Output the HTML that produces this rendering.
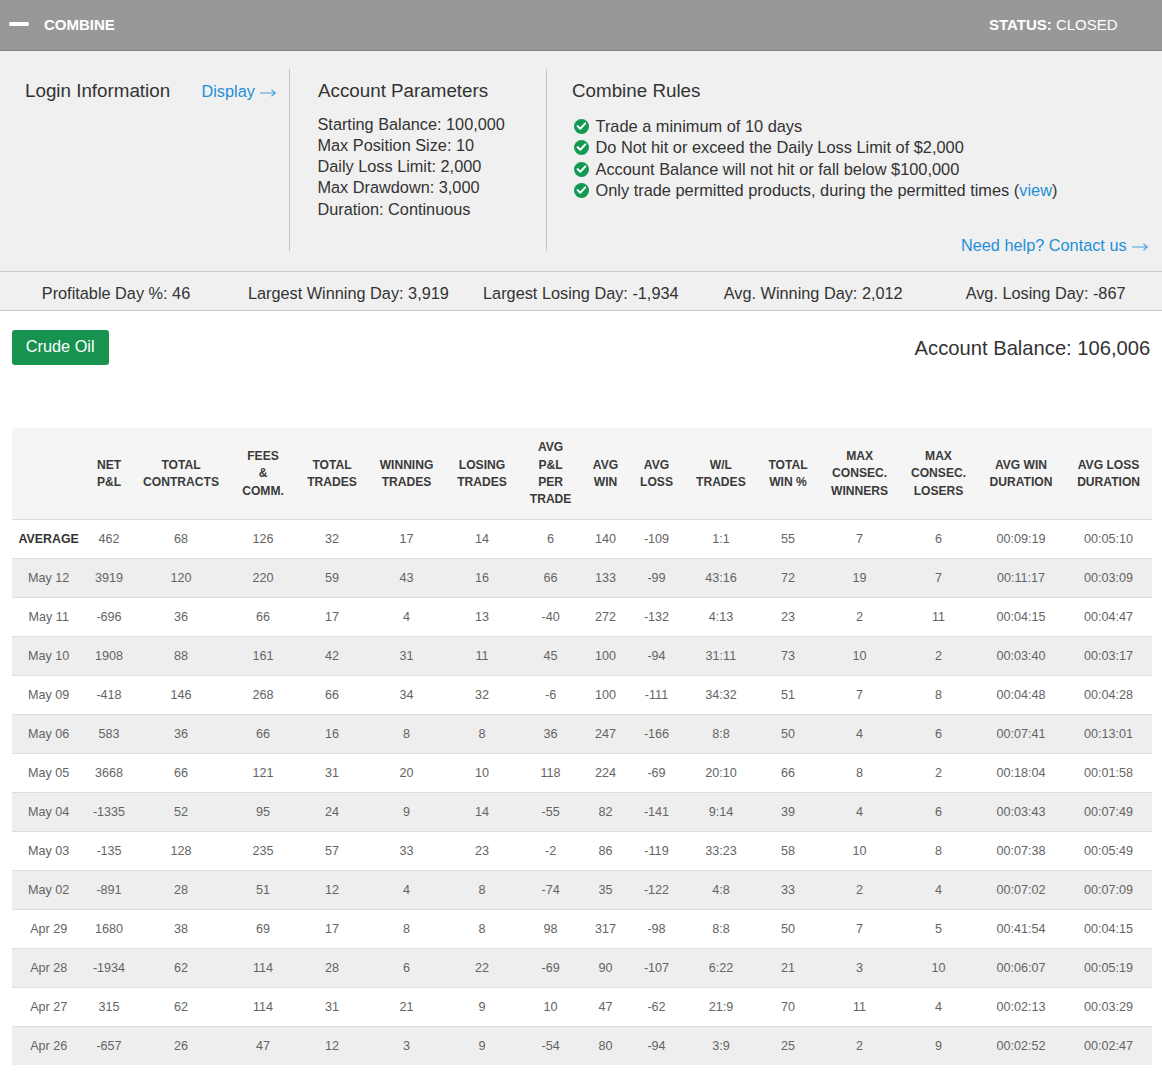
<!DOCTYPE html>
<html><head><meta charset="utf-8"><style>
html,body{margin:0;padding:0;background:#fff;width:1162px;height:1076px;overflow:hidden;position:relative;font-family:"Liberation Sans",sans-serif}
.t{position:absolute;white-space:nowrap}
</style></head><body>
<div style="position:absolute;left:0;top:0;width:1162px;height:50px;background:#989898;border-bottom:1px solid #868686"></div>
<div style="position:absolute;left:9px;top:21.7px;width:20px;height:4px;border-radius:2px;background:#fff"></div>
<div class="t" style="left:44px;top:16.00px;font-size:15px;line-height:18.0px;color:#fff;font-weight:bold;">COMBINE</div>
<div class="t" style="right:44.40000000000009px;top:16.20px;font-size:15px;line-height:18.0px;color:#fff;font-weight:normal;"><b>STATUS:</b> CLOSED</div>
<div style="position:absolute;left:0;top:51px;width:1162px;height:220px;background:#f0f0f0"></div>
<div style="position:absolute;left:289px;top:69px;width:1px;height:182px;background:#c4c4c4"></div>
<div style="position:absolute;left:546px;top:69px;width:1px;height:182px;background:#c4c4c4"></div>
<div class="t" style="left:25px;top:80.21px;font-size:18.8px;line-height:22.56px;color:#333;font-weight:normal;">Login Information</div>
<div class="t" style="left:201.5px;top:82.37px;font-size:16.3px;line-height:19.56px;color:#1f8fd8;font-weight:normal;">Display</div>
<svg style="position:absolute;left:259px;top:88px;overflow:visible" width="17.5" height="10"><path d="M1 5 H16.1 M12.5 1.8 L16.3 5 L12.5 8.2" stroke="#4aa2e2" stroke-width="1.15" fill="none"/></svg>
<div class="t" style="left:318px;top:80.21px;font-size:18.8px;line-height:22.56px;color:#333;font-weight:normal;">Account Parameters</div>
<div class="t" style="left:317.5px;top:114.57px;font-size:16.3px;line-height:19.56px;color:#333;font-weight:normal;">Starting Balance: 100,000</div>
<div class="t" style="left:317.5px;top:135.82px;font-size:16.3px;line-height:19.56px;color:#333;font-weight:normal;">Max Position Size: 10</div>
<div class="t" style="left:317.5px;top:157.07px;font-size:16.3px;line-height:19.56px;color:#333;font-weight:normal;">Daily Loss Limit: 2,000</div>
<div class="t" style="left:317.5px;top:178.32px;font-size:16.3px;line-height:19.56px;color:#333;font-weight:normal;">Max Drawdown: 3,000</div>
<div class="t" style="left:317.5px;top:199.57px;font-size:16.3px;line-height:19.56px;color:#333;font-weight:normal;">Duration: Continuous</div>
<div class="t" style="left:572px;top:79.81px;font-size:18.8px;line-height:22.56px;color:#333;font-weight:normal;">Combine Rules</div>
<svg style="position:absolute;left:573.5px;top:119.00px" width="15" height="15" viewBox="0 0 15 15"><circle cx="7.5" cy="7.5" r="7.5" fill="#129a52"/><path d="M3.6 7.1 L6.3 9.7 L11.3 4.4" stroke="#fff" stroke-width="2" fill="none" stroke-linecap="round" stroke-linejoin="round"/></svg>
<div class="t" style="left:595.5px;top:116.92px;font-size:16.36px;line-height:19.63px;color:#333;font-weight:normal;">Trade a minimum of 10 days</div>
<svg style="position:absolute;left:573.5px;top:140.25px" width="15" height="15" viewBox="0 0 15 15"><circle cx="7.5" cy="7.5" r="7.5" fill="#129a52"/><path d="M3.6 7.1 L6.3 9.7 L11.3 4.4" stroke="#fff" stroke-width="2" fill="none" stroke-linecap="round" stroke-linejoin="round"/></svg>
<div class="t" style="left:595.5px;top:137.92px;font-size:16.36px;line-height:19.63px;color:#333;font-weight:normal;">Do Not hit or exceed the Daily Loss Limit of $2,000</div>
<svg style="position:absolute;left:573.5px;top:161.50px" width="15" height="15" viewBox="0 0 15 15"><circle cx="7.5" cy="7.5" r="7.5" fill="#129a52"/><path d="M3.6 7.1 L6.3 9.7 L11.3 4.4" stroke="#fff" stroke-width="2" fill="none" stroke-linecap="round" stroke-linejoin="round"/></svg>
<div class="t" style="left:595.5px;top:159.92px;font-size:16.36px;line-height:19.63px;color:#333;font-weight:normal;">Account Balance will not hit or fall below $100,000</div>
<svg style="position:absolute;left:573.5px;top:182.75px" width="15" height="15" viewBox="0 0 15 15"><circle cx="7.5" cy="7.5" r="7.5" fill="#129a52"/><path d="M3.6 7.1 L6.3 9.7 L11.3 4.4" stroke="#fff" stroke-width="2" fill="none" stroke-linecap="round" stroke-linejoin="round"/></svg>
<div class="t" style="left:595.5px;top:180.72px;font-size:16.36px;line-height:19.63px;color:#333;font-weight:normal;">Only trade permitted products, during the permitted times (<span style="color:#1f8fd8">view</span>)</div>
<div class="t" style="right:35.40000000000009px;top:235.57px;font-size:16.3px;line-height:19.56px;color:#1f8fd8;font-weight:normal;">Need help? Contact us</div>
<svg style="position:absolute;left:1131px;top:241.5px;overflow:visible" width="17.5" height="10"><path d="M1 5 H16.1 M12.5 1.8 L16.3 5 L12.5 8.2" stroke="#4aa2e2" stroke-width="1.15" fill="none"/></svg>
<div style="position:absolute;left:0;top:271px;width:1162px;height:38px;background:#f0f0f0;border-top:1px solid #c8c8c8;border-bottom:1px solid #c8c8c8"></div>
<div class="t" style="left:-184.0px;width:600px;text-align:center;top:283.57px;font-size:16.3px;line-height:19.56px;color:#333;font-weight:normal;">Profitable Day %: 46</div>
<div class="t" style="left:48.39999999999998px;width:600px;text-align:center;top:283.57px;font-size:16.3px;line-height:19.56px;color:#333;font-weight:normal;">Largest Winning Day: 3,919</div>
<div class="t" style="left:280.79999999999995px;width:600px;text-align:center;top:283.57px;font-size:16.3px;line-height:19.56px;color:#333;font-weight:normal;">Largest Losing Day: -1,934</div>
<div class="t" style="left:513.2px;width:600px;text-align:center;top:283.57px;font-size:16.3px;line-height:19.56px;color:#333;font-weight:normal;">Avg. Winning Day: 2,012</div>
<div class="t" style="left:745.5999999999999px;width:600px;text-align:center;top:283.57px;font-size:16.3px;line-height:19.56px;color:#333;font-weight:normal;">Avg. Losing Day: -867</div>
<div style="position:absolute;left:12px;top:330px;width:96.5px;height:35px;border-radius:3px;background:#17924f"></div>
<div class="t" style="left:-239.8px;width:600px;text-align:center;top:336.87px;font-size:16.3px;line-height:19.56px;color:#fff;font-weight:normal;">Crude Oil</div>
<div class="t" style="right:11.700000000000045px;top:335.88px;font-size:20.2px;line-height:24.24px;color:#333;font-weight:normal;">Account Balance: 106,006</div>
<div style="position:absolute;left:12px;top:428px;width:1140px;height:91px;background:#f5f5f5;border-bottom:1px solid #dadada"></div>
<div class="t" style="left:-191.0px;width:600px;text-align:center;top:457.65px;font-size:12.1px;line-height:14.52px;color:#3a3a3a;font-weight:bold;">NET</div>
<div class="t" style="left:-191.0px;width:600px;text-align:center;top:475.05px;font-size:12.1px;line-height:14.52px;color:#3a3a3a;font-weight:bold;">P&amp;L</div>
<div class="t" style="left:-119.0px;width:600px;text-align:center;top:457.65px;font-size:12.1px;line-height:14.52px;color:#3a3a3a;font-weight:bold;">TOTAL</div>
<div class="t" style="left:-119.0px;width:600px;text-align:center;top:475.05px;font-size:12.1px;line-height:14.52px;color:#3a3a3a;font-weight:bold;">CONTRACTS</div>
<div class="t" style="left:-37.0px;width:600px;text-align:center;top:448.95px;font-size:12.1px;line-height:14.52px;color:#3a3a3a;font-weight:bold;">FEES</div>
<div class="t" style="left:-37.0px;width:600px;text-align:center;top:466.35px;font-size:12.1px;line-height:14.52px;color:#3a3a3a;font-weight:bold;">&amp;</div>
<div class="t" style="left:-37.0px;width:600px;text-align:center;top:483.75px;font-size:12.1px;line-height:14.52px;color:#3a3a3a;font-weight:bold;">COMM.</div>
<div class="t" style="left:32.0px;width:600px;text-align:center;top:457.65px;font-size:12.1px;line-height:14.52px;color:#3a3a3a;font-weight:bold;">TOTAL</div>
<div class="t" style="left:32.0px;width:600px;text-align:center;top:475.05px;font-size:12.1px;line-height:14.52px;color:#3a3a3a;font-weight:bold;">TRADES</div>
<div class="t" style="left:106.5px;width:600px;text-align:center;top:457.65px;font-size:12.1px;line-height:14.52px;color:#3a3a3a;font-weight:bold;">WINNING</div>
<div class="t" style="left:106.5px;width:600px;text-align:center;top:475.05px;font-size:12.1px;line-height:14.52px;color:#3a3a3a;font-weight:bold;">TRADES</div>
<div class="t" style="left:182.0px;width:600px;text-align:center;top:457.65px;font-size:12.1px;line-height:14.52px;color:#3a3a3a;font-weight:bold;">LOSING</div>
<div class="t" style="left:182.0px;width:600px;text-align:center;top:475.05px;font-size:12.1px;line-height:14.52px;color:#3a3a3a;font-weight:bold;">TRADES</div>
<div class="t" style="left:250.5999999999999px;width:600px;text-align:center;top:440.25px;font-size:12.1px;line-height:14.52px;color:#3a3a3a;font-weight:bold;">AVG</div>
<div class="t" style="left:250.5999999999999px;width:600px;text-align:center;top:457.65px;font-size:12.1px;line-height:14.52px;color:#3a3a3a;font-weight:bold;">P&amp;L</div>
<div class="t" style="left:250.5999999999999px;width:600px;text-align:center;top:475.05px;font-size:12.1px;line-height:14.52px;color:#3a3a3a;font-weight:bold;">PER</div>
<div class="t" style="left:250.5999999999999px;width:600px;text-align:center;top:492.45px;font-size:12.1px;line-height:14.52px;color:#3a3a3a;font-weight:bold;">TRADE</div>
<div class="t" style="left:305.5px;width:600px;text-align:center;top:457.65px;font-size:12.1px;line-height:14.52px;color:#3a3a3a;font-weight:bold;">AVG</div>
<div class="t" style="left:305.5px;width:600px;text-align:center;top:475.05px;font-size:12.1px;line-height:14.52px;color:#3a3a3a;font-weight:bold;">WIN</div>
<div class="t" style="left:356.5px;width:600px;text-align:center;top:457.65px;font-size:12.1px;line-height:14.52px;color:#3a3a3a;font-weight:bold;">AVG</div>
<div class="t" style="left:356.5px;width:600px;text-align:center;top:475.05px;font-size:12.1px;line-height:14.52px;color:#3a3a3a;font-weight:bold;">LOSS</div>
<div class="t" style="left:420.9px;width:600px;text-align:center;top:457.65px;font-size:12.1px;line-height:14.52px;color:#3a3a3a;font-weight:bold;">W/L</div>
<div class="t" style="left:420.9px;width:600px;text-align:center;top:475.05px;font-size:12.1px;line-height:14.52px;color:#3a3a3a;font-weight:bold;">TRADES</div>
<div class="t" style="left:488.0px;width:600px;text-align:center;top:457.65px;font-size:12.1px;line-height:14.52px;color:#3a3a3a;font-weight:bold;">TOTAL</div>
<div class="t" style="left:488.0px;width:600px;text-align:center;top:475.05px;font-size:12.1px;line-height:14.52px;color:#3a3a3a;font-weight:bold;">WIN %</div>
<div class="t" style="left:559.6px;width:600px;text-align:center;top:448.95px;font-size:12.1px;line-height:14.52px;color:#3a3a3a;font-weight:bold;">MAX</div>
<div class="t" style="left:559.6px;width:600px;text-align:center;top:466.35px;font-size:12.1px;line-height:14.52px;color:#3a3a3a;font-weight:bold;">CONSEC.</div>
<div class="t" style="left:559.6px;width:600px;text-align:center;top:483.75px;font-size:12.1px;line-height:14.52px;color:#3a3a3a;font-weight:bold;">WINNERS</div>
<div class="t" style="left:638.5px;width:600px;text-align:center;top:448.95px;font-size:12.1px;line-height:14.52px;color:#3a3a3a;font-weight:bold;">MAX</div>
<div class="t" style="left:638.5px;width:600px;text-align:center;top:466.35px;font-size:12.1px;line-height:14.52px;color:#3a3a3a;font-weight:bold;">CONSEC.</div>
<div class="t" style="left:638.5px;width:600px;text-align:center;top:483.75px;font-size:12.1px;line-height:14.52px;color:#3a3a3a;font-weight:bold;">LOSERS</div>
<div class="t" style="left:721.0px;width:600px;text-align:center;top:457.65px;font-size:12.1px;line-height:14.52px;color:#3a3a3a;font-weight:bold;">AVG WIN</div>
<div class="t" style="left:721.0px;width:600px;text-align:center;top:475.05px;font-size:12.1px;line-height:14.52px;color:#3a3a3a;font-weight:bold;">DURATION</div>
<div class="t" style="left:808.5999999999999px;width:600px;text-align:center;top:457.65px;font-size:12.1px;line-height:14.52px;color:#3a3a3a;font-weight:bold;">AVG LOSS</div>
<div class="t" style="left:808.5999999999999px;width:600px;text-align:center;top:475.05px;font-size:12.1px;line-height:14.52px;color:#3a3a3a;font-weight:bold;">DURATION</div>
<div style="position:absolute;left:12px;top:520px;width:1140px;height:38px;background:#ffffff;border-bottom:1px solid #dddddd;"></div>
<div class="t" style="left:-251.3px;width:600px;text-align:center;top:532.36px;font-size:12.4px;line-height:14.88px;color:#333;font-weight:bold;">AVERAGE</div>
<div class="t" style="left:-191.0px;width:600px;text-align:center;top:532.17px;font-size:12.6px;line-height:15.12px;color:#646464;font-weight:normal;">462</div>
<div class="t" style="left:-119.0px;width:600px;text-align:center;top:532.17px;font-size:12.6px;line-height:15.12px;color:#646464;font-weight:normal;">68</div>
<div class="t" style="left:-37.0px;width:600px;text-align:center;top:532.17px;font-size:12.6px;line-height:15.12px;color:#646464;font-weight:normal;">126</div>
<div class="t" style="left:32.0px;width:600px;text-align:center;top:532.17px;font-size:12.6px;line-height:15.12px;color:#646464;font-weight:normal;">32</div>
<div class="t" style="left:106.5px;width:600px;text-align:center;top:532.17px;font-size:12.6px;line-height:15.12px;color:#646464;font-weight:normal;">17</div>
<div class="t" style="left:182.0px;width:600px;text-align:center;top:532.17px;font-size:12.6px;line-height:15.12px;color:#646464;font-weight:normal;">14</div>
<div class="t" style="left:250.5999999999999px;width:600px;text-align:center;top:532.17px;font-size:12.6px;line-height:15.12px;color:#646464;font-weight:normal;">6</div>
<div class="t" style="left:305.5px;width:600px;text-align:center;top:532.17px;font-size:12.6px;line-height:15.12px;color:#646464;font-weight:normal;">140</div>
<div class="t" style="left:356.5px;width:600px;text-align:center;top:532.17px;font-size:12.6px;line-height:15.12px;color:#646464;font-weight:normal;">-109</div>
<div class="t" style="left:420.9px;width:600px;text-align:center;top:532.17px;font-size:12.6px;line-height:15.12px;color:#646464;font-weight:normal;">1:1</div>
<div class="t" style="left:488.0px;width:600px;text-align:center;top:532.17px;font-size:12.6px;line-height:15.12px;color:#646464;font-weight:normal;">55</div>
<div class="t" style="left:559.6px;width:600px;text-align:center;top:532.17px;font-size:12.6px;line-height:15.12px;color:#646464;font-weight:normal;">7</div>
<div class="t" style="left:638.5px;width:600px;text-align:center;top:532.17px;font-size:12.6px;line-height:15.12px;color:#646464;font-weight:normal;">6</div>
<div class="t" style="left:721.0px;width:600px;text-align:center;top:532.17px;font-size:12.6px;line-height:15.12px;color:#646464;font-weight:normal;">00:09:19</div>
<div class="t" style="left:808.5999999999999px;width:600px;text-align:center;top:532.17px;font-size:12.6px;line-height:15.12px;color:#646464;font-weight:normal;">00:05:10</div>
<div style="position:absolute;left:12px;top:559px;width:1140px;height:38px;background:#eeeeee;border-bottom:1px solid #dddddd;"></div>
<div class="t" style="left:-251.3px;width:600px;text-align:center;top:571.17px;font-size:12.6px;line-height:15.12px;color:#646464;font-weight:normal;">May 12</div>
<div class="t" style="left:-191.0px;width:600px;text-align:center;top:571.17px;font-size:12.6px;line-height:15.12px;color:#646464;font-weight:normal;">3919</div>
<div class="t" style="left:-119.0px;width:600px;text-align:center;top:571.17px;font-size:12.6px;line-height:15.12px;color:#646464;font-weight:normal;">120</div>
<div class="t" style="left:-37.0px;width:600px;text-align:center;top:571.17px;font-size:12.6px;line-height:15.12px;color:#646464;font-weight:normal;">220</div>
<div class="t" style="left:32.0px;width:600px;text-align:center;top:571.17px;font-size:12.6px;line-height:15.12px;color:#646464;font-weight:normal;">59</div>
<div class="t" style="left:106.5px;width:600px;text-align:center;top:571.17px;font-size:12.6px;line-height:15.12px;color:#646464;font-weight:normal;">43</div>
<div class="t" style="left:182.0px;width:600px;text-align:center;top:571.17px;font-size:12.6px;line-height:15.12px;color:#646464;font-weight:normal;">16</div>
<div class="t" style="left:250.5999999999999px;width:600px;text-align:center;top:571.17px;font-size:12.6px;line-height:15.12px;color:#646464;font-weight:normal;">66</div>
<div class="t" style="left:305.5px;width:600px;text-align:center;top:571.17px;font-size:12.6px;line-height:15.12px;color:#646464;font-weight:normal;">133</div>
<div class="t" style="left:356.5px;width:600px;text-align:center;top:571.17px;font-size:12.6px;line-height:15.12px;color:#646464;font-weight:normal;">-99</div>
<div class="t" style="left:420.9px;width:600px;text-align:center;top:571.17px;font-size:12.6px;line-height:15.12px;color:#646464;font-weight:normal;">43:16</div>
<div class="t" style="left:488.0px;width:600px;text-align:center;top:571.17px;font-size:12.6px;line-height:15.12px;color:#646464;font-weight:normal;">72</div>
<div class="t" style="left:559.6px;width:600px;text-align:center;top:571.17px;font-size:12.6px;line-height:15.12px;color:#646464;font-weight:normal;">19</div>
<div class="t" style="left:638.5px;width:600px;text-align:center;top:571.17px;font-size:12.6px;line-height:15.12px;color:#646464;font-weight:normal;">7</div>
<div class="t" style="left:721.0px;width:600px;text-align:center;top:571.17px;font-size:12.6px;line-height:15.12px;color:#646464;font-weight:normal;">00:11:17</div>
<div class="t" style="left:808.5999999999999px;width:600px;text-align:center;top:571.17px;font-size:12.6px;line-height:15.12px;color:#646464;font-weight:normal;">00:03:09</div>
<div style="position:absolute;left:12px;top:598px;width:1140px;height:38px;background:#ffffff;border-bottom:1px solid #dddddd;"></div>
<div class="t" style="left:-251.3px;width:600px;text-align:center;top:610.17px;font-size:12.6px;line-height:15.12px;color:#646464;font-weight:normal;">May 11</div>
<div class="t" style="left:-191.0px;width:600px;text-align:center;top:610.17px;font-size:12.6px;line-height:15.12px;color:#646464;font-weight:normal;">-696</div>
<div class="t" style="left:-119.0px;width:600px;text-align:center;top:610.17px;font-size:12.6px;line-height:15.12px;color:#646464;font-weight:normal;">36</div>
<div class="t" style="left:-37.0px;width:600px;text-align:center;top:610.17px;font-size:12.6px;line-height:15.12px;color:#646464;font-weight:normal;">66</div>
<div class="t" style="left:32.0px;width:600px;text-align:center;top:610.17px;font-size:12.6px;line-height:15.12px;color:#646464;font-weight:normal;">17</div>
<div class="t" style="left:106.5px;width:600px;text-align:center;top:610.17px;font-size:12.6px;line-height:15.12px;color:#646464;font-weight:normal;">4</div>
<div class="t" style="left:182.0px;width:600px;text-align:center;top:610.17px;font-size:12.6px;line-height:15.12px;color:#646464;font-weight:normal;">13</div>
<div class="t" style="left:250.5999999999999px;width:600px;text-align:center;top:610.17px;font-size:12.6px;line-height:15.12px;color:#646464;font-weight:normal;">-40</div>
<div class="t" style="left:305.5px;width:600px;text-align:center;top:610.17px;font-size:12.6px;line-height:15.12px;color:#646464;font-weight:normal;">272</div>
<div class="t" style="left:356.5px;width:600px;text-align:center;top:610.17px;font-size:12.6px;line-height:15.12px;color:#646464;font-weight:normal;">-132</div>
<div class="t" style="left:420.9px;width:600px;text-align:center;top:610.17px;font-size:12.6px;line-height:15.12px;color:#646464;font-weight:normal;">4:13</div>
<div class="t" style="left:488.0px;width:600px;text-align:center;top:610.17px;font-size:12.6px;line-height:15.12px;color:#646464;font-weight:normal;">23</div>
<div class="t" style="left:559.6px;width:600px;text-align:center;top:610.17px;font-size:12.6px;line-height:15.12px;color:#646464;font-weight:normal;">2</div>
<div class="t" style="left:638.5px;width:600px;text-align:center;top:610.17px;font-size:12.6px;line-height:15.12px;color:#646464;font-weight:normal;">11</div>
<div class="t" style="left:721.0px;width:600px;text-align:center;top:610.17px;font-size:12.6px;line-height:15.12px;color:#646464;font-weight:normal;">00:04:15</div>
<div class="t" style="left:808.5999999999999px;width:600px;text-align:center;top:610.17px;font-size:12.6px;line-height:15.12px;color:#646464;font-weight:normal;">00:04:47</div>
<div style="position:absolute;left:12px;top:637px;width:1140px;height:38px;background:#eeeeee;border-bottom:1px solid #dddddd;"></div>
<div class="t" style="left:-251.3px;width:600px;text-align:center;top:649.17px;font-size:12.6px;line-height:15.12px;color:#646464;font-weight:normal;">May 10</div>
<div class="t" style="left:-191.0px;width:600px;text-align:center;top:649.17px;font-size:12.6px;line-height:15.12px;color:#646464;font-weight:normal;">1908</div>
<div class="t" style="left:-119.0px;width:600px;text-align:center;top:649.17px;font-size:12.6px;line-height:15.12px;color:#646464;font-weight:normal;">88</div>
<div class="t" style="left:-37.0px;width:600px;text-align:center;top:649.17px;font-size:12.6px;line-height:15.12px;color:#646464;font-weight:normal;">161</div>
<div class="t" style="left:32.0px;width:600px;text-align:center;top:649.17px;font-size:12.6px;line-height:15.12px;color:#646464;font-weight:normal;">42</div>
<div class="t" style="left:106.5px;width:600px;text-align:center;top:649.17px;font-size:12.6px;line-height:15.12px;color:#646464;font-weight:normal;">31</div>
<div class="t" style="left:182.0px;width:600px;text-align:center;top:649.17px;font-size:12.6px;line-height:15.12px;color:#646464;font-weight:normal;">11</div>
<div class="t" style="left:250.5999999999999px;width:600px;text-align:center;top:649.17px;font-size:12.6px;line-height:15.12px;color:#646464;font-weight:normal;">45</div>
<div class="t" style="left:305.5px;width:600px;text-align:center;top:649.17px;font-size:12.6px;line-height:15.12px;color:#646464;font-weight:normal;">100</div>
<div class="t" style="left:356.5px;width:600px;text-align:center;top:649.17px;font-size:12.6px;line-height:15.12px;color:#646464;font-weight:normal;">-94</div>
<div class="t" style="left:420.9px;width:600px;text-align:center;top:649.17px;font-size:12.6px;line-height:15.12px;color:#646464;font-weight:normal;">31:11</div>
<div class="t" style="left:488.0px;width:600px;text-align:center;top:649.17px;font-size:12.6px;line-height:15.12px;color:#646464;font-weight:normal;">73</div>
<div class="t" style="left:559.6px;width:600px;text-align:center;top:649.17px;font-size:12.6px;line-height:15.12px;color:#646464;font-weight:normal;">10</div>
<div class="t" style="left:638.5px;width:600px;text-align:center;top:649.17px;font-size:12.6px;line-height:15.12px;color:#646464;font-weight:normal;">2</div>
<div class="t" style="left:721.0px;width:600px;text-align:center;top:649.17px;font-size:12.6px;line-height:15.12px;color:#646464;font-weight:normal;">00:03:40</div>
<div class="t" style="left:808.5999999999999px;width:600px;text-align:center;top:649.17px;font-size:12.6px;line-height:15.12px;color:#646464;font-weight:normal;">00:03:17</div>
<div style="position:absolute;left:12px;top:676px;width:1140px;height:38px;background:#ffffff;border-bottom:1px solid #dddddd;"></div>
<div class="t" style="left:-251.3px;width:600px;text-align:center;top:688.17px;font-size:12.6px;line-height:15.12px;color:#646464;font-weight:normal;">May 09</div>
<div class="t" style="left:-191.0px;width:600px;text-align:center;top:688.17px;font-size:12.6px;line-height:15.12px;color:#646464;font-weight:normal;">-418</div>
<div class="t" style="left:-119.0px;width:600px;text-align:center;top:688.17px;font-size:12.6px;line-height:15.12px;color:#646464;font-weight:normal;">146</div>
<div class="t" style="left:-37.0px;width:600px;text-align:center;top:688.17px;font-size:12.6px;line-height:15.12px;color:#646464;font-weight:normal;">268</div>
<div class="t" style="left:32.0px;width:600px;text-align:center;top:688.17px;font-size:12.6px;line-height:15.12px;color:#646464;font-weight:normal;">66</div>
<div class="t" style="left:106.5px;width:600px;text-align:center;top:688.17px;font-size:12.6px;line-height:15.12px;color:#646464;font-weight:normal;">34</div>
<div class="t" style="left:182.0px;width:600px;text-align:center;top:688.17px;font-size:12.6px;line-height:15.12px;color:#646464;font-weight:normal;">32</div>
<div class="t" style="left:250.5999999999999px;width:600px;text-align:center;top:688.17px;font-size:12.6px;line-height:15.12px;color:#646464;font-weight:normal;">-6</div>
<div class="t" style="left:305.5px;width:600px;text-align:center;top:688.17px;font-size:12.6px;line-height:15.12px;color:#646464;font-weight:normal;">100</div>
<div class="t" style="left:356.5px;width:600px;text-align:center;top:688.17px;font-size:12.6px;line-height:15.12px;color:#646464;font-weight:normal;">-111</div>
<div class="t" style="left:420.9px;width:600px;text-align:center;top:688.17px;font-size:12.6px;line-height:15.12px;color:#646464;font-weight:normal;">34:32</div>
<div class="t" style="left:488.0px;width:600px;text-align:center;top:688.17px;font-size:12.6px;line-height:15.12px;color:#646464;font-weight:normal;">51</div>
<div class="t" style="left:559.6px;width:600px;text-align:center;top:688.17px;font-size:12.6px;line-height:15.12px;color:#646464;font-weight:normal;">7</div>
<div class="t" style="left:638.5px;width:600px;text-align:center;top:688.17px;font-size:12.6px;line-height:15.12px;color:#646464;font-weight:normal;">8</div>
<div class="t" style="left:721.0px;width:600px;text-align:center;top:688.17px;font-size:12.6px;line-height:15.12px;color:#646464;font-weight:normal;">00:04:48</div>
<div class="t" style="left:808.5999999999999px;width:600px;text-align:center;top:688.17px;font-size:12.6px;line-height:15.12px;color:#646464;font-weight:normal;">00:04:28</div>
<div style="position:absolute;left:12px;top:715px;width:1140px;height:38px;background:#eeeeee;border-bottom:1px solid #dddddd;"></div>
<div class="t" style="left:-251.3px;width:600px;text-align:center;top:727.17px;font-size:12.6px;line-height:15.12px;color:#646464;font-weight:normal;">May 06</div>
<div class="t" style="left:-191.0px;width:600px;text-align:center;top:727.17px;font-size:12.6px;line-height:15.12px;color:#646464;font-weight:normal;">583</div>
<div class="t" style="left:-119.0px;width:600px;text-align:center;top:727.17px;font-size:12.6px;line-height:15.12px;color:#646464;font-weight:normal;">36</div>
<div class="t" style="left:-37.0px;width:600px;text-align:center;top:727.17px;font-size:12.6px;line-height:15.12px;color:#646464;font-weight:normal;">66</div>
<div class="t" style="left:32.0px;width:600px;text-align:center;top:727.17px;font-size:12.6px;line-height:15.12px;color:#646464;font-weight:normal;">16</div>
<div class="t" style="left:106.5px;width:600px;text-align:center;top:727.17px;font-size:12.6px;line-height:15.12px;color:#646464;font-weight:normal;">8</div>
<div class="t" style="left:182.0px;width:600px;text-align:center;top:727.17px;font-size:12.6px;line-height:15.12px;color:#646464;font-weight:normal;">8</div>
<div class="t" style="left:250.5999999999999px;width:600px;text-align:center;top:727.17px;font-size:12.6px;line-height:15.12px;color:#646464;font-weight:normal;">36</div>
<div class="t" style="left:305.5px;width:600px;text-align:center;top:727.17px;font-size:12.6px;line-height:15.12px;color:#646464;font-weight:normal;">247</div>
<div class="t" style="left:356.5px;width:600px;text-align:center;top:727.17px;font-size:12.6px;line-height:15.12px;color:#646464;font-weight:normal;">-166</div>
<div class="t" style="left:420.9px;width:600px;text-align:center;top:727.17px;font-size:12.6px;line-height:15.12px;color:#646464;font-weight:normal;">8:8</div>
<div class="t" style="left:488.0px;width:600px;text-align:center;top:727.17px;font-size:12.6px;line-height:15.12px;color:#646464;font-weight:normal;">50</div>
<div class="t" style="left:559.6px;width:600px;text-align:center;top:727.17px;font-size:12.6px;line-height:15.12px;color:#646464;font-weight:normal;">4</div>
<div class="t" style="left:638.5px;width:600px;text-align:center;top:727.17px;font-size:12.6px;line-height:15.12px;color:#646464;font-weight:normal;">6</div>
<div class="t" style="left:721.0px;width:600px;text-align:center;top:727.17px;font-size:12.6px;line-height:15.12px;color:#646464;font-weight:normal;">00:07:41</div>
<div class="t" style="left:808.5999999999999px;width:600px;text-align:center;top:727.17px;font-size:12.6px;line-height:15.12px;color:#646464;font-weight:normal;">00:13:01</div>
<div style="position:absolute;left:12px;top:754px;width:1140px;height:38px;background:#ffffff;border-bottom:1px solid #dddddd;"></div>
<div class="t" style="left:-251.3px;width:600px;text-align:center;top:766.17px;font-size:12.6px;line-height:15.12px;color:#646464;font-weight:normal;">May 05</div>
<div class="t" style="left:-191.0px;width:600px;text-align:center;top:766.17px;font-size:12.6px;line-height:15.12px;color:#646464;font-weight:normal;">3668</div>
<div class="t" style="left:-119.0px;width:600px;text-align:center;top:766.17px;font-size:12.6px;line-height:15.12px;color:#646464;font-weight:normal;">66</div>
<div class="t" style="left:-37.0px;width:600px;text-align:center;top:766.17px;font-size:12.6px;line-height:15.12px;color:#646464;font-weight:normal;">121</div>
<div class="t" style="left:32.0px;width:600px;text-align:center;top:766.17px;font-size:12.6px;line-height:15.12px;color:#646464;font-weight:normal;">31</div>
<div class="t" style="left:106.5px;width:600px;text-align:center;top:766.17px;font-size:12.6px;line-height:15.12px;color:#646464;font-weight:normal;">20</div>
<div class="t" style="left:182.0px;width:600px;text-align:center;top:766.17px;font-size:12.6px;line-height:15.12px;color:#646464;font-weight:normal;">10</div>
<div class="t" style="left:250.5999999999999px;width:600px;text-align:center;top:766.17px;font-size:12.6px;line-height:15.12px;color:#646464;font-weight:normal;">118</div>
<div class="t" style="left:305.5px;width:600px;text-align:center;top:766.17px;font-size:12.6px;line-height:15.12px;color:#646464;font-weight:normal;">224</div>
<div class="t" style="left:356.5px;width:600px;text-align:center;top:766.17px;font-size:12.6px;line-height:15.12px;color:#646464;font-weight:normal;">-69</div>
<div class="t" style="left:420.9px;width:600px;text-align:center;top:766.17px;font-size:12.6px;line-height:15.12px;color:#646464;font-weight:normal;">20:10</div>
<div class="t" style="left:488.0px;width:600px;text-align:center;top:766.17px;font-size:12.6px;line-height:15.12px;color:#646464;font-weight:normal;">66</div>
<div class="t" style="left:559.6px;width:600px;text-align:center;top:766.17px;font-size:12.6px;line-height:15.12px;color:#646464;font-weight:normal;">8</div>
<div class="t" style="left:638.5px;width:600px;text-align:center;top:766.17px;font-size:12.6px;line-height:15.12px;color:#646464;font-weight:normal;">2</div>
<div class="t" style="left:721.0px;width:600px;text-align:center;top:766.17px;font-size:12.6px;line-height:15.12px;color:#646464;font-weight:normal;">00:18:04</div>
<div class="t" style="left:808.5999999999999px;width:600px;text-align:center;top:766.17px;font-size:12.6px;line-height:15.12px;color:#646464;font-weight:normal;">00:01:58</div>
<div style="position:absolute;left:12px;top:793px;width:1140px;height:38px;background:#eeeeee;border-bottom:1px solid #dddddd;"></div>
<div class="t" style="left:-251.3px;width:600px;text-align:center;top:805.17px;font-size:12.6px;line-height:15.12px;color:#646464;font-weight:normal;">May 04</div>
<div class="t" style="left:-191.0px;width:600px;text-align:center;top:805.17px;font-size:12.6px;line-height:15.12px;color:#646464;font-weight:normal;">-1335</div>
<div class="t" style="left:-119.0px;width:600px;text-align:center;top:805.17px;font-size:12.6px;line-height:15.12px;color:#646464;font-weight:normal;">52</div>
<div class="t" style="left:-37.0px;width:600px;text-align:center;top:805.17px;font-size:12.6px;line-height:15.12px;color:#646464;font-weight:normal;">95</div>
<div class="t" style="left:32.0px;width:600px;text-align:center;top:805.17px;font-size:12.6px;line-height:15.12px;color:#646464;font-weight:normal;">24</div>
<div class="t" style="left:106.5px;width:600px;text-align:center;top:805.17px;font-size:12.6px;line-height:15.12px;color:#646464;font-weight:normal;">9</div>
<div class="t" style="left:182.0px;width:600px;text-align:center;top:805.17px;font-size:12.6px;line-height:15.12px;color:#646464;font-weight:normal;">14</div>
<div class="t" style="left:250.5999999999999px;width:600px;text-align:center;top:805.17px;font-size:12.6px;line-height:15.12px;color:#646464;font-weight:normal;">-55</div>
<div class="t" style="left:305.5px;width:600px;text-align:center;top:805.17px;font-size:12.6px;line-height:15.12px;color:#646464;font-weight:normal;">82</div>
<div class="t" style="left:356.5px;width:600px;text-align:center;top:805.17px;font-size:12.6px;line-height:15.12px;color:#646464;font-weight:normal;">-141</div>
<div class="t" style="left:420.9px;width:600px;text-align:center;top:805.17px;font-size:12.6px;line-height:15.12px;color:#646464;font-weight:normal;">9:14</div>
<div class="t" style="left:488.0px;width:600px;text-align:center;top:805.17px;font-size:12.6px;line-height:15.12px;color:#646464;font-weight:normal;">39</div>
<div class="t" style="left:559.6px;width:600px;text-align:center;top:805.17px;font-size:12.6px;line-height:15.12px;color:#646464;font-weight:normal;">4</div>
<div class="t" style="left:638.5px;width:600px;text-align:center;top:805.17px;font-size:12.6px;line-height:15.12px;color:#646464;font-weight:normal;">6</div>
<div class="t" style="left:721.0px;width:600px;text-align:center;top:805.17px;font-size:12.6px;line-height:15.12px;color:#646464;font-weight:normal;">00:03:43</div>
<div class="t" style="left:808.5999999999999px;width:600px;text-align:center;top:805.17px;font-size:12.6px;line-height:15.12px;color:#646464;font-weight:normal;">00:07:49</div>
<div style="position:absolute;left:12px;top:832px;width:1140px;height:38px;background:#ffffff;border-bottom:1px solid #dddddd;"></div>
<div class="t" style="left:-251.3px;width:600px;text-align:center;top:844.17px;font-size:12.6px;line-height:15.12px;color:#646464;font-weight:normal;">May 03</div>
<div class="t" style="left:-191.0px;width:600px;text-align:center;top:844.17px;font-size:12.6px;line-height:15.12px;color:#646464;font-weight:normal;">-135</div>
<div class="t" style="left:-119.0px;width:600px;text-align:center;top:844.17px;font-size:12.6px;line-height:15.12px;color:#646464;font-weight:normal;">128</div>
<div class="t" style="left:-37.0px;width:600px;text-align:center;top:844.17px;font-size:12.6px;line-height:15.12px;color:#646464;font-weight:normal;">235</div>
<div class="t" style="left:32.0px;width:600px;text-align:center;top:844.17px;font-size:12.6px;line-height:15.12px;color:#646464;font-weight:normal;">57</div>
<div class="t" style="left:106.5px;width:600px;text-align:center;top:844.17px;font-size:12.6px;line-height:15.12px;color:#646464;font-weight:normal;">33</div>
<div class="t" style="left:182.0px;width:600px;text-align:center;top:844.17px;font-size:12.6px;line-height:15.12px;color:#646464;font-weight:normal;">23</div>
<div class="t" style="left:250.5999999999999px;width:600px;text-align:center;top:844.17px;font-size:12.6px;line-height:15.12px;color:#646464;font-weight:normal;">-2</div>
<div class="t" style="left:305.5px;width:600px;text-align:center;top:844.17px;font-size:12.6px;line-height:15.12px;color:#646464;font-weight:normal;">86</div>
<div class="t" style="left:356.5px;width:600px;text-align:center;top:844.17px;font-size:12.6px;line-height:15.12px;color:#646464;font-weight:normal;">-119</div>
<div class="t" style="left:420.9px;width:600px;text-align:center;top:844.17px;font-size:12.6px;line-height:15.12px;color:#646464;font-weight:normal;">33:23</div>
<div class="t" style="left:488.0px;width:600px;text-align:center;top:844.17px;font-size:12.6px;line-height:15.12px;color:#646464;font-weight:normal;">58</div>
<div class="t" style="left:559.6px;width:600px;text-align:center;top:844.17px;font-size:12.6px;line-height:15.12px;color:#646464;font-weight:normal;">10</div>
<div class="t" style="left:638.5px;width:600px;text-align:center;top:844.17px;font-size:12.6px;line-height:15.12px;color:#646464;font-weight:normal;">8</div>
<div class="t" style="left:721.0px;width:600px;text-align:center;top:844.17px;font-size:12.6px;line-height:15.12px;color:#646464;font-weight:normal;">00:07:38</div>
<div class="t" style="left:808.5999999999999px;width:600px;text-align:center;top:844.17px;font-size:12.6px;line-height:15.12px;color:#646464;font-weight:normal;">00:05:49</div>
<div style="position:absolute;left:12px;top:871px;width:1140px;height:38px;background:#eeeeee;border-bottom:1px solid #dddddd;"></div>
<div class="t" style="left:-251.3px;width:600px;text-align:center;top:883.17px;font-size:12.6px;line-height:15.12px;color:#646464;font-weight:normal;">May 02</div>
<div class="t" style="left:-191.0px;width:600px;text-align:center;top:883.17px;font-size:12.6px;line-height:15.12px;color:#646464;font-weight:normal;">-891</div>
<div class="t" style="left:-119.0px;width:600px;text-align:center;top:883.17px;font-size:12.6px;line-height:15.12px;color:#646464;font-weight:normal;">28</div>
<div class="t" style="left:-37.0px;width:600px;text-align:center;top:883.17px;font-size:12.6px;line-height:15.12px;color:#646464;font-weight:normal;">51</div>
<div class="t" style="left:32.0px;width:600px;text-align:center;top:883.17px;font-size:12.6px;line-height:15.12px;color:#646464;font-weight:normal;">12</div>
<div class="t" style="left:106.5px;width:600px;text-align:center;top:883.17px;font-size:12.6px;line-height:15.12px;color:#646464;font-weight:normal;">4</div>
<div class="t" style="left:182.0px;width:600px;text-align:center;top:883.17px;font-size:12.6px;line-height:15.12px;color:#646464;font-weight:normal;">8</div>
<div class="t" style="left:250.5999999999999px;width:600px;text-align:center;top:883.17px;font-size:12.6px;line-height:15.12px;color:#646464;font-weight:normal;">-74</div>
<div class="t" style="left:305.5px;width:600px;text-align:center;top:883.17px;font-size:12.6px;line-height:15.12px;color:#646464;font-weight:normal;">35</div>
<div class="t" style="left:356.5px;width:600px;text-align:center;top:883.17px;font-size:12.6px;line-height:15.12px;color:#646464;font-weight:normal;">-122</div>
<div class="t" style="left:420.9px;width:600px;text-align:center;top:883.17px;font-size:12.6px;line-height:15.12px;color:#646464;font-weight:normal;">4:8</div>
<div class="t" style="left:488.0px;width:600px;text-align:center;top:883.17px;font-size:12.6px;line-height:15.12px;color:#646464;font-weight:normal;">33</div>
<div class="t" style="left:559.6px;width:600px;text-align:center;top:883.17px;font-size:12.6px;line-height:15.12px;color:#646464;font-weight:normal;">2</div>
<div class="t" style="left:638.5px;width:600px;text-align:center;top:883.17px;font-size:12.6px;line-height:15.12px;color:#646464;font-weight:normal;">4</div>
<div class="t" style="left:721.0px;width:600px;text-align:center;top:883.17px;font-size:12.6px;line-height:15.12px;color:#646464;font-weight:normal;">00:07:02</div>
<div class="t" style="left:808.5999999999999px;width:600px;text-align:center;top:883.17px;font-size:12.6px;line-height:15.12px;color:#646464;font-weight:normal;">00:07:09</div>
<div style="position:absolute;left:12px;top:910px;width:1140px;height:38px;background:#ffffff;border-bottom:1px solid #dddddd;"></div>
<div class="t" style="left:-251.3px;width:600px;text-align:center;top:922.17px;font-size:12.6px;line-height:15.12px;color:#646464;font-weight:normal;">Apr 29</div>
<div class="t" style="left:-191.0px;width:600px;text-align:center;top:922.17px;font-size:12.6px;line-height:15.12px;color:#646464;font-weight:normal;">1680</div>
<div class="t" style="left:-119.0px;width:600px;text-align:center;top:922.17px;font-size:12.6px;line-height:15.12px;color:#646464;font-weight:normal;">38</div>
<div class="t" style="left:-37.0px;width:600px;text-align:center;top:922.17px;font-size:12.6px;line-height:15.12px;color:#646464;font-weight:normal;">69</div>
<div class="t" style="left:32.0px;width:600px;text-align:center;top:922.17px;font-size:12.6px;line-height:15.12px;color:#646464;font-weight:normal;">17</div>
<div class="t" style="left:106.5px;width:600px;text-align:center;top:922.17px;font-size:12.6px;line-height:15.12px;color:#646464;font-weight:normal;">8</div>
<div class="t" style="left:182.0px;width:600px;text-align:center;top:922.17px;font-size:12.6px;line-height:15.12px;color:#646464;font-weight:normal;">8</div>
<div class="t" style="left:250.5999999999999px;width:600px;text-align:center;top:922.17px;font-size:12.6px;line-height:15.12px;color:#646464;font-weight:normal;">98</div>
<div class="t" style="left:305.5px;width:600px;text-align:center;top:922.17px;font-size:12.6px;line-height:15.12px;color:#646464;font-weight:normal;">317</div>
<div class="t" style="left:356.5px;width:600px;text-align:center;top:922.17px;font-size:12.6px;line-height:15.12px;color:#646464;font-weight:normal;">-98</div>
<div class="t" style="left:420.9px;width:600px;text-align:center;top:922.17px;font-size:12.6px;line-height:15.12px;color:#646464;font-weight:normal;">8:8</div>
<div class="t" style="left:488.0px;width:600px;text-align:center;top:922.17px;font-size:12.6px;line-height:15.12px;color:#646464;font-weight:normal;">50</div>
<div class="t" style="left:559.6px;width:600px;text-align:center;top:922.17px;font-size:12.6px;line-height:15.12px;color:#646464;font-weight:normal;">7</div>
<div class="t" style="left:638.5px;width:600px;text-align:center;top:922.17px;font-size:12.6px;line-height:15.12px;color:#646464;font-weight:normal;">5</div>
<div class="t" style="left:721.0px;width:600px;text-align:center;top:922.17px;font-size:12.6px;line-height:15.12px;color:#646464;font-weight:normal;">00:41:54</div>
<div class="t" style="left:808.5999999999999px;width:600px;text-align:center;top:922.17px;font-size:12.6px;line-height:15.12px;color:#646464;font-weight:normal;">00:04:15</div>
<div style="position:absolute;left:12px;top:949px;width:1140px;height:38px;background:#eeeeee;border-bottom:1px solid #dddddd;"></div>
<div class="t" style="left:-251.3px;width:600px;text-align:center;top:961.17px;font-size:12.6px;line-height:15.12px;color:#646464;font-weight:normal;">Apr 28</div>
<div class="t" style="left:-191.0px;width:600px;text-align:center;top:961.17px;font-size:12.6px;line-height:15.12px;color:#646464;font-weight:normal;">-1934</div>
<div class="t" style="left:-119.0px;width:600px;text-align:center;top:961.17px;font-size:12.6px;line-height:15.12px;color:#646464;font-weight:normal;">62</div>
<div class="t" style="left:-37.0px;width:600px;text-align:center;top:961.17px;font-size:12.6px;line-height:15.12px;color:#646464;font-weight:normal;">114</div>
<div class="t" style="left:32.0px;width:600px;text-align:center;top:961.17px;font-size:12.6px;line-height:15.12px;color:#646464;font-weight:normal;">28</div>
<div class="t" style="left:106.5px;width:600px;text-align:center;top:961.17px;font-size:12.6px;line-height:15.12px;color:#646464;font-weight:normal;">6</div>
<div class="t" style="left:182.0px;width:600px;text-align:center;top:961.17px;font-size:12.6px;line-height:15.12px;color:#646464;font-weight:normal;">22</div>
<div class="t" style="left:250.5999999999999px;width:600px;text-align:center;top:961.17px;font-size:12.6px;line-height:15.12px;color:#646464;font-weight:normal;">-69</div>
<div class="t" style="left:305.5px;width:600px;text-align:center;top:961.17px;font-size:12.6px;line-height:15.12px;color:#646464;font-weight:normal;">90</div>
<div class="t" style="left:356.5px;width:600px;text-align:center;top:961.17px;font-size:12.6px;line-height:15.12px;color:#646464;font-weight:normal;">-107</div>
<div class="t" style="left:420.9px;width:600px;text-align:center;top:961.17px;font-size:12.6px;line-height:15.12px;color:#646464;font-weight:normal;">6:22</div>
<div class="t" style="left:488.0px;width:600px;text-align:center;top:961.17px;font-size:12.6px;line-height:15.12px;color:#646464;font-weight:normal;">21</div>
<div class="t" style="left:559.6px;width:600px;text-align:center;top:961.17px;font-size:12.6px;line-height:15.12px;color:#646464;font-weight:normal;">3</div>
<div class="t" style="left:638.5px;width:600px;text-align:center;top:961.17px;font-size:12.6px;line-height:15.12px;color:#646464;font-weight:normal;">10</div>
<div class="t" style="left:721.0px;width:600px;text-align:center;top:961.17px;font-size:12.6px;line-height:15.12px;color:#646464;font-weight:normal;">00:06:07</div>
<div class="t" style="left:808.5999999999999px;width:600px;text-align:center;top:961.17px;font-size:12.6px;line-height:15.12px;color:#646464;font-weight:normal;">00:05:19</div>
<div style="position:absolute;left:12px;top:988px;width:1140px;height:38px;background:#ffffff;border-bottom:1px solid #dddddd;"></div>
<div class="t" style="left:-251.3px;width:600px;text-align:center;top:1000.17px;font-size:12.6px;line-height:15.12px;color:#646464;font-weight:normal;">Apr 27</div>
<div class="t" style="left:-191.0px;width:600px;text-align:center;top:1000.17px;font-size:12.6px;line-height:15.12px;color:#646464;font-weight:normal;">315</div>
<div class="t" style="left:-119.0px;width:600px;text-align:center;top:1000.17px;font-size:12.6px;line-height:15.12px;color:#646464;font-weight:normal;">62</div>
<div class="t" style="left:-37.0px;width:600px;text-align:center;top:1000.17px;font-size:12.6px;line-height:15.12px;color:#646464;font-weight:normal;">114</div>
<div class="t" style="left:32.0px;width:600px;text-align:center;top:1000.17px;font-size:12.6px;line-height:15.12px;color:#646464;font-weight:normal;">31</div>
<div class="t" style="left:106.5px;width:600px;text-align:center;top:1000.17px;font-size:12.6px;line-height:15.12px;color:#646464;font-weight:normal;">21</div>
<div class="t" style="left:182.0px;width:600px;text-align:center;top:1000.17px;font-size:12.6px;line-height:15.12px;color:#646464;font-weight:normal;">9</div>
<div class="t" style="left:250.5999999999999px;width:600px;text-align:center;top:1000.17px;font-size:12.6px;line-height:15.12px;color:#646464;font-weight:normal;">10</div>
<div class="t" style="left:305.5px;width:600px;text-align:center;top:1000.17px;font-size:12.6px;line-height:15.12px;color:#646464;font-weight:normal;">47</div>
<div class="t" style="left:356.5px;width:600px;text-align:center;top:1000.17px;font-size:12.6px;line-height:15.12px;color:#646464;font-weight:normal;">-62</div>
<div class="t" style="left:420.9px;width:600px;text-align:center;top:1000.17px;font-size:12.6px;line-height:15.12px;color:#646464;font-weight:normal;">21:9</div>
<div class="t" style="left:488.0px;width:600px;text-align:center;top:1000.17px;font-size:12.6px;line-height:15.12px;color:#646464;font-weight:normal;">70</div>
<div class="t" style="left:559.6px;width:600px;text-align:center;top:1000.17px;font-size:12.6px;line-height:15.12px;color:#646464;font-weight:normal;">11</div>
<div class="t" style="left:638.5px;width:600px;text-align:center;top:1000.17px;font-size:12.6px;line-height:15.12px;color:#646464;font-weight:normal;">4</div>
<div class="t" style="left:721.0px;width:600px;text-align:center;top:1000.17px;font-size:12.6px;line-height:15.12px;color:#646464;font-weight:normal;">00:02:13</div>
<div class="t" style="left:808.5999999999999px;width:600px;text-align:center;top:1000.17px;font-size:12.6px;line-height:15.12px;color:#646464;font-weight:normal;">00:03:29</div>
<div style="position:absolute;left:12px;top:1027px;width:1140px;height:38px;background:#eeeeee;"></div>
<div class="t" style="left:-251.3px;width:600px;text-align:center;top:1039.17px;font-size:12.6px;line-height:15.12px;color:#646464;font-weight:normal;">Apr 26</div>
<div class="t" style="left:-191.0px;width:600px;text-align:center;top:1039.17px;font-size:12.6px;line-height:15.12px;color:#646464;font-weight:normal;">-657</div>
<div class="t" style="left:-119.0px;width:600px;text-align:center;top:1039.17px;font-size:12.6px;line-height:15.12px;color:#646464;font-weight:normal;">26</div>
<div class="t" style="left:-37.0px;width:600px;text-align:center;top:1039.17px;font-size:12.6px;line-height:15.12px;color:#646464;font-weight:normal;">47</div>
<div class="t" style="left:32.0px;width:600px;text-align:center;top:1039.17px;font-size:12.6px;line-height:15.12px;color:#646464;font-weight:normal;">12</div>
<div class="t" style="left:106.5px;width:600px;text-align:center;top:1039.17px;font-size:12.6px;line-height:15.12px;color:#646464;font-weight:normal;">3</div>
<div class="t" style="left:182.0px;width:600px;text-align:center;top:1039.17px;font-size:12.6px;line-height:15.12px;color:#646464;font-weight:normal;">9</div>
<div class="t" style="left:250.5999999999999px;width:600px;text-align:center;top:1039.17px;font-size:12.6px;line-height:15.12px;color:#646464;font-weight:normal;">-54</div>
<div class="t" style="left:305.5px;width:600px;text-align:center;top:1039.17px;font-size:12.6px;line-height:15.12px;color:#646464;font-weight:normal;">80</div>
<div class="t" style="left:356.5px;width:600px;text-align:center;top:1039.17px;font-size:12.6px;line-height:15.12px;color:#646464;font-weight:normal;">-94</div>
<div class="t" style="left:420.9px;width:600px;text-align:center;top:1039.17px;font-size:12.6px;line-height:15.12px;color:#646464;font-weight:normal;">3:9</div>
<div class="t" style="left:488.0px;width:600px;text-align:center;top:1039.17px;font-size:12.6px;line-height:15.12px;color:#646464;font-weight:normal;">25</div>
<div class="t" style="left:559.6px;width:600px;text-align:center;top:1039.17px;font-size:12.6px;line-height:15.12px;color:#646464;font-weight:normal;">2</div>
<div class="t" style="left:638.5px;width:600px;text-align:center;top:1039.17px;font-size:12.6px;line-height:15.12px;color:#646464;font-weight:normal;">9</div>
<div class="t" style="left:721.0px;width:600px;text-align:center;top:1039.17px;font-size:12.6px;line-height:15.12px;color:#646464;font-weight:normal;">00:02:52</div>
<div class="t" style="left:808.5999999999999px;width:600px;text-align:center;top:1039.17px;font-size:12.6px;line-height:15.12px;color:#646464;font-weight:normal;">00:02:47</div>
</body></html>
